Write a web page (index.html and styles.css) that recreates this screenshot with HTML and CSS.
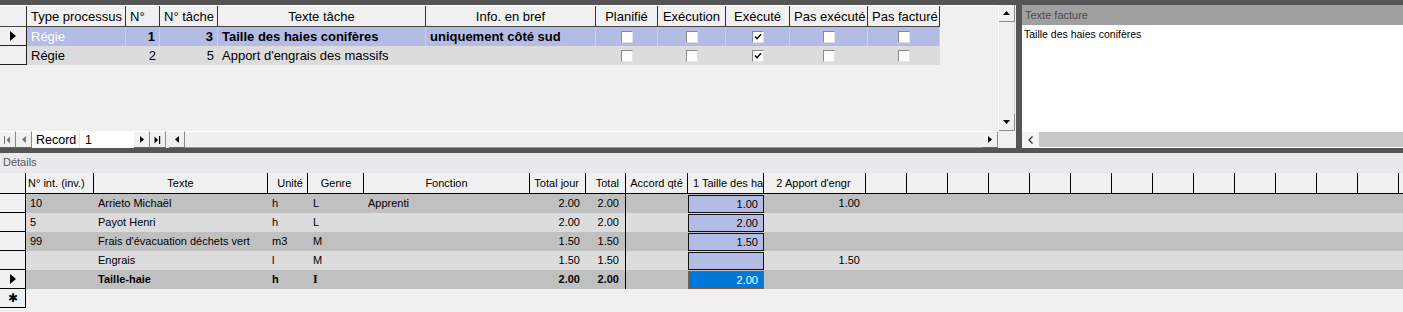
FILE: index.html
```html
<!DOCTYPE html>
<html lang="fr">
<head>
<meta charset="utf-8">
<title>Tâches</title>
<link rel="stylesheet" href="styles.css">
</head>
<body>
<div class="bar-top"></div>
<div class="top">
  <div class="main">
    <div class="grid-area">
      <div class="grid">
        <div class="trow thead">
          <div class="tc c-sel"></div>
          <div class="tc c-type">Type processus</div>
          <div class="tc c-n">N°</div>
          <div class="tc c-nt">N° tâche</div>
          <div class="tc c-txt ctr">Texte tâche</div>
          <div class="tc c-info ctr">Info. en bref</div>
          <div class="tc c-pl ctr">Planifié</div>
          <div class="tc c-ex ctr">Exécution</div>
          <div class="tc c-exd ctr">Exécuté</div>
          <div class="tc c-pe ctr">Pas exécuté</div>
          <div class="tc c-pf ctr">Pas facturé</div>
        </div>
        <div class="trow sel-row bold">
          <div class="tc c-sel"><svg width="6" height="10" viewBox="0 0 6 10"><path d="M0 0L6 5L0 10Z" fill="#000"/></svg></div>
          <div class="tc c-type cur">Régie</div>
          <div class="tc c-n rt">1</div>
          <div class="tc c-nt rt">3</div>
          <div class="tc c-txt">Taille des haies conifères</div>
          <div class="tc c-info">uniquement côté sud</div>
          <div class="tc c-pl chk"><span class="cb"></span></div>
          <div class="tc c-ex chk"><span class="cb"></span></div>
          <div class="tc c-exd chk"><span class="cb"><svg width="8" height="8" viewBox="0 0 8 8"><path d="M1 3.5L3 5.8L7 1.2" stroke="#000" stroke-width="1.4" fill="none"/></svg></span></div>
          <div class="tc c-pe chk"><span class="cb"></span></div>
          <div class="tc c-pf chk"><span class="cb"></span></div>
        </div>
        <div class="trow alt-row">
          <div class="tc c-sel"></div>
          <div class="tc c-type">Régie</div>
          <div class="tc c-n rt">2</div>
          <div class="tc c-nt rt">5</div>
          <div class="tc c-txt">Apport d'engrais des massifs</div>
          <div class="tc c-info"></div>
          <div class="tc c-pl chk"><span class="cb"></span></div>
          <div class="tc c-ex chk"><span class="cb"></span></div>
          <div class="tc c-exd chk"><span class="cb"><svg width="8" height="8" viewBox="0 0 8 8"><path d="M1 3.5L3 5.8L7 1.2" stroke="#000" stroke-width="1.4" fill="none"/></svg></span></div>
          <div class="tc c-pe chk"><span class="cb"></span></div>
          <div class="tc c-pf chk"><span class="cb"></span></div>
        </div>
      </div>
      <div class="vscroll">
        <div class="sbtn"><svg width="7" height="4" viewBox="0 0 7 4"><path d="M0 4L3.5 0L7 4Z" fill="#000"/></svg></div>
        <div class="strack"></div>
        <div class="sbtn"><svg width="7" height="4" viewBox="0 0 7 4"><path d="M0 0L3.5 4L7 0Z" fill="#000"/></svg></div>
      </div>
    </div>
    <div class="nav">
      <div class="nbtn"><svg width="7" height="8" viewBox="0 0 7 8"><rect x="0" y="0" width="1" height="8" fill="#777"/><path d="M6 0.5L2.5 4L6 7.5Z" fill="#777"/></svg></div>
      <div class="nbtn"><svg width="4" height="7" viewBox="0 0 4 7"><path d="M4 0L0 3.5L4 7Z" fill="#777"/></svg></div>
      <div class="nlabel">Record</div>
      <div class="nfield">1</div>
      <div class="nbtn"><svg width="4" height="7" viewBox="0 0 4 7"><path d="M0 0L4 3.5L0 7Z" fill="#000"/></svg></div>
      <div class="nbtn"><svg width="7" height="8" viewBox="0 0 7 8"><path d="M0.5 0.5L4 4L0.5 7.5Z" fill="#000"/><rect x="5" y="0" width="1.2" height="8" fill="#000"/></svg></div>
      <div class="ngap"></div>
      <div class="nbtn"><svg width="4" height="7" viewBox="0 0 4 7"><path d="M4 0L0 3.5L4 7Z" fill="#000"/></svg></div>
      <div class="htrack"></div>
      <div class="nbtn"><svg width="4" height="7" viewBox="0 0 4 7"><path d="M0 0L4 3.5L0 7Z" fill="#000"/></svg></div>
      <div class="corner"></div>
    </div>
  </div>
  <div class="vsep"></div>
  <div class="side">
    <div class="side-head">Texte facture</div>
    <div class="side-body">Taille des haies conifères</div>
    <div class="side-scroll">
      <div class="lt"><svg width="5" height="8" viewBox="0 0 5 8"><path d="M4.5 0.5L1 4L4.5 7.5" stroke="#333" stroke-width="1.3" fill="none"/></svg></div>
      <div class="side-track"></div>
    </div>
  </div>
</div>
<div class="hsep"></div>
<div class="details-label">Détails</div>
<div class="sub">
  <div class="brow bhead">
    <div class="bc b-sel"></div>
    <div class="bc b-inv">N° int. (inv.)</div>
    <div class="bc b-txt ctr">Texte</div>
    <div class="bc b-un rt">Unité</div>
    <div class="bc b-ge ctr">Genre</div>
    <div class="bc b-fo ctr">Fonction</div>
    <div class="bc b-tj rt">Total jour</div>
    <div class="bc b-to rt">Total</div>
    <div class="bc b-ac ctr">Accord qté</div>
    <div class="bc b-ta">1 Taille des ha</div>
    <div class="bc b-ap ctr">2 Apport d'engr</div>
    <div class="bc b-x"></div><div class="bc b-x"></div><div class="bc b-x"></div><div class="bc b-x"></div><div class="bc b-x"></div><div class="bc b-x"></div><div class="bc b-x"></div><div class="bc b-x"></div><div class="bc b-x"></div><div class="bc b-x"></div><div class="bc b-x"></div><div class="bc b-x"></div><div class="bc b-x"></div>
  </div>
  <div class="brow dark">
    <div class="bc b-sel"></div>
    <div class="bc b-inv">10</div>
    <div class="bc b-txt">Arrieto Michaël</div>
    <div class="bc b-un">h</div>
    <div class="bc b-ge">L</div>
    <div class="bc b-fo">Apprenti</div>
    <div class="bc b-tj rt">2.00</div>
    <div class="bc b-to rt">2.00</div>
    <div class="bc b-ac"></div>
    <div class="bc b-ta"><div class="box">1.00</div></div>
    <div class="bc b-ap rt">1.00</div>
  </div>
  <div class="brow light">
    <div class="bc b-sel"></div>
    <div class="bc b-inv">5</div>
    <div class="bc b-txt">Payot Henri</div>
    <div class="bc b-un">h</div>
    <div class="bc b-ge">L</div>
    <div class="bc b-fo"></div>
    <div class="bc b-tj rt">2.00</div>
    <div class="bc b-to rt">2.00</div>
    <div class="bc b-ac"></div>
    <div class="bc b-ta"><div class="box">2.00</div></div>
    <div class="bc b-ap rt"></div>
  </div>
  <div class="brow dark">
    <div class="bc b-sel"></div>
    <div class="bc b-inv">99</div>
    <div class="bc b-txt">Frais d'évacuation déchets vert</div>
    <div class="bc b-un">m3</div>
    <div class="bc b-ge">M</div>
    <div class="bc b-fo"></div>
    <div class="bc b-tj rt">1.50</div>
    <div class="bc b-to rt">1.50</div>
    <div class="bc b-ac"></div>
    <div class="bc b-ta"><div class="box">1.50</div></div>
    <div class="bc b-ap rt"></div>
  </div>
  <div class="brow light">
    <div class="bc b-sel"></div>
    <div class="bc b-inv"></div>
    <div class="bc b-txt">Engrais</div>
    <div class="bc b-un">l</div>
    <div class="bc b-ge">M</div>
    <div class="bc b-fo"></div>
    <div class="bc b-tj rt">1.50</div>
    <div class="bc b-to rt">1.50</div>
    <div class="bc b-ac"></div>
    <div class="bc b-ta"><div class="box"></div></div>
    <div class="bc b-ap rt">1.50</div>
  </div>
  <div class="brow dark bold">
    <div class="bc b-sel"><svg width="6" height="10" viewBox="0 0 6 10"><path d="M0 0L6 5L0 10Z" fill="#000"/></svg></div>
    <div class="bc b-inv"></div>
    <div class="bc b-txt">Taille-haie</div>
    <div class="bc b-un">h</div>
    <div class="bc b-ge serif">I</div>
    <div class="bc b-fo"></div>
    <div class="bc b-tj rt">2.00</div>
    <div class="bc b-to rt">2.00</div>
    <div class="bc b-ac"></div>
    <div class="bc b-ta"><div class="box cur-box">2.00</div></div>
    <div class="bc b-ap rt"></div>
  </div>
  <div class="brow newrow">
    <div class="bc b-sel star">✱</div>
  </div>
</div>
</body>
</html>
```

FILE: styles.css
```css
* { box-sizing: border-box; }
body {
  margin: 0;
  width: 1403px;
  height: 312px;
  overflow: hidden;
  background: #f0f0f0;
  font-family: "Liberation Sans", Arial, sans-serif;
  color: #000;
}
.bar-top { height: 5px; background: #555; }
.top { display: flex; height: 143px; }
.main { width: 1016px; display: flex; flex-direction: column; }
.grid-area { display: flex; height: 126px; }
.grid { width: 998px; }

.trow { display: flex; height: 19px; font-size: 13px; line-height: 19px; }
.thead { height: 22px; line-height: 21px; border-top: 1px solid #fff; }
.thead .tc { border-right: 1px solid #333; border-bottom: 1px solid #444; background: #f0f0f0; }
.thead .c-sel { border-right: 1px solid #333; }
.tc { padding: 0 4px; white-space: nowrap; overflow: hidden; }
.ctr { text-align: center; }
.rt { text-align: right; }
.c-sel { width: 27px; padding: 0; border-right: 1px solid #222; border-bottom: 1px solid #222; background: #f0f0f0; display: flex; align-items: center; justify-content: center; }
.c-type { width: 99px; }
.c-n { width: 34px; }
.c-nt { width: 58px; }
.c-txt { width: 208px; }
.c-info { width: 170px; }
.c-pl { width: 62px; }
.c-ex { width: 68px; }
.c-exd { width: 64px; }
.c-pe { width: 78px; }
.c-pf { width: 72px; }
.bold { font-weight: bold; }
.sel-row .tc:not(.c-sel) { background: #b4bce6; border-right: 1px solid #c9cfee; }
.sel-row .cur { background: #a7b3d9; color: #fff; font-weight: normal; }
.alt-row .tc:not(.c-sel) { background: #dcdcdc; }
.chk { display: flex; align-items: center; justify-content: center; }
.cb {
  width: 12px; height: 12px; background: #fff;
  border: 1px solid; border-color: #8a8a8a #e4e4e4 #e4e4e4 #8a8a8a;
  display: flex; align-items: center; justify-content: center;
}

.vscroll { width: 17px; display: flex; flex-direction: column; border-left: 1px solid #fff; background: #f0f0f0; }
.sbtn {
  height: 17px; display: flex; align-items: center; justify-content: center;
  border-bottom: 1px solid #8a8a8a; border-right: 1px solid #8a8a8a; background: #f0f0f0;
}
.strack { flex: 1; border-right: 1px solid #d0d0d0; }

.nav { height: 17px; display: flex; align-items: stretch; font-size: 12.5px; }
.nbtn {
  width: 16px; display: flex; align-items: center; justify-content: center;
  border-right: 1px solid #8a8a8a; border-bottom: 1px solid #6a6a6a; border-top: 1px solid #fff; background: #f0f0f0;
}
.nlabel { width: 48px; padding-left: 4px; line-height: 16px; background: #fafafa; border-top: 1px solid #fff; border-right: 1px solid #e0e0e0; }
.nfield { width: 54px; padding-left: 5px; line-height: 16px; background: #fff; border-top: 1px solid #fff; }
.ngap { width: 3px; }
.htrack { flex: 1; border-top: 1px solid #fff; border-bottom: 1px solid #9a9a9a; background: #efefef; }
.corner { width: 18px; background: #f0f0f0; }

.vsep { width: 6px; background: #555; }
.side { flex: 1; display: flex; flex-direction: column; background: #fff; }
.side-head { height: 20px; background: #a0a0a0; color: #4e4e4e; font-size: 11px; line-height: 20px; padding-left: 3px; }
.side-body { flex: 1; font-size: 10.5px; padding: 3px 2px; }
.side-scroll { height: 15px; display: flex; margin-bottom: 1px; }
.lt { width: 17px; background: #f4f4f4; display: flex; align-items: center; justify-content: center; }
.side-track { flex: 1; background: #c8c8c8; }

.hsep { height: 5px; background: #555; }
.details-label { height: 20px; background: #e9e9eb; color: #555; font-size: 11px; line-height: 19px; padding-left: 3px; }

.sub { font-size: 11px; }
.brow { display: flex; height: 19px; line-height: 19px; }
.bhead { height: 21px; line-height: 20px; background: #f0f0f0; border-bottom: 1px solid #000; }
.bhead .bc { border-right: 1px solid #000; }
.bc { padding: 0 4px; white-space: nowrap; overflow: hidden; flex: none; }
.b-sel { width: 26px; padding: 0; border-right: 1px solid #000; display: flex; align-items: center; justify-content: center; }
.brow:not(.bhead) .b-sel { background: #f0f0f0; border-bottom: 1px solid #000; }
.b-inv { width: 68px; }
.bhead .b-inv { padding-left: 2px; }
.b-txt { width: 174px; }
.b-un { width: 40px; }
.b-ge { width: 56px; padding-left: 5px; }
.b-fo { width: 166px; }
.b-tj { width: 56px; padding-right: 6px; }
.b-to { width: 40px; padding-right: 6px; }
.b-ac { width: 62px; }
.b-ta { width: 76px; padding: 0; }
.bhead .b-ta { padding-left: 5px; }
.b-ap { width: 102px; padding-right: 6px; }
.b-x { width: 41px; }
.bhead .ctr { text-align: center; }
.bhead .rt { text-align: right; }
.dark { background: #c0c0c0; }
.light { background: #dcdcdc; }
.brow:not(.bhead) .b-to { border-right: 1px solid #000; }
.box {
  height: 18px; margin-top: 1px; border: 1px solid #111; background: #b4bce6;
  text-align: right; padding-right: 5px; line-height: 16px;
}
.cur-box { background: #0078d7; color: #fff; border-color: #7d5e3e; font-weight: normal; }
.serif { font-family: "Liberation Serif", "Times New Roman", serif; font-size: 12px; }
.newrow { background: #f0f0f0; }
.star { font-size: 12px; font-weight: normal; }
```
